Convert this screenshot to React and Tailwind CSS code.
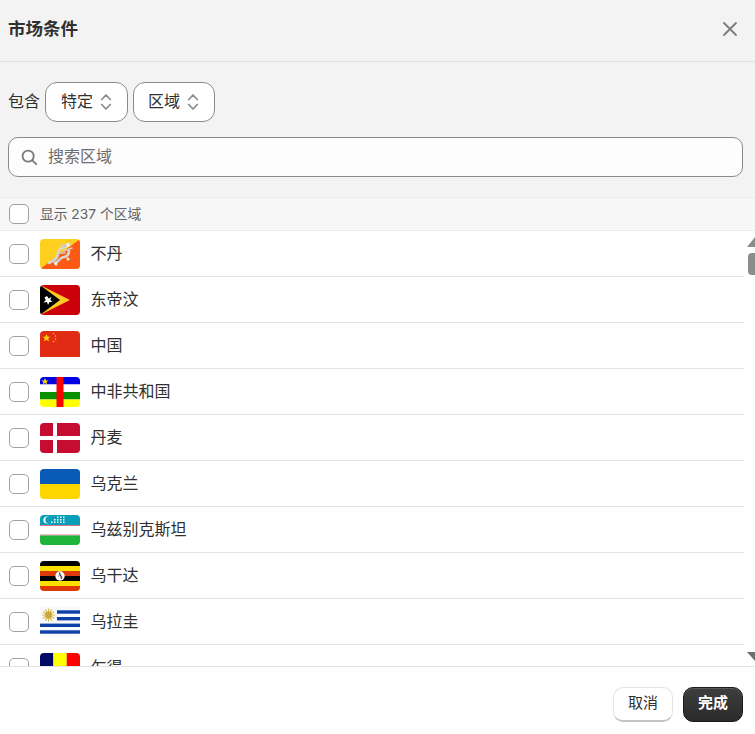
import React from "react";

const FONT = "font-['Inter','Noto_Sans_CJK_SC',sans-serif]";

function Bhutan() {
  return (
    <>
      <rect width="40" height="30" fill="#ffcf1f" />
      <polygon points="40,0 40,30 0,30" fill="#fb5a14" />
      <path d="M9 24 C13 22 15 21 17 18 C19 15 17 12 20 10 C22 8 25 9 27 7 M15 24 C20 22 20 18 24 18 C27 18 29 15 29 12" stroke="#dcd8d1" strokeWidth="2.6" fill="none" strokeLinecap="round" />
      <path d="M21 6 L31 5 M24 12 L32 9 M12 21 L16 25 M20 14 L25 14" stroke="#d2cec6" strokeWidth="1.6" fill="none" strokeLinecap="round" />
      <path d="M18 16 L21 12 M23 8 L27 6 M16 22 L21 20" stroke="#b5b0a8" strokeWidth="0.7" fill="none" />
      <circle cx="28" cy="6" r="2" fill="#efece6" />
      <circle cx="16" cy="25" r="1.5" fill="#f4f1ec" />
      <circle cx="28" cy="20" r="1.5" fill="#f4f1ec" />
    </>
  );
}
function TimorLeste() {
  return (
    <>
      <rect width="40" height="30" fill="#cc000a" />
      <polygon points="0,0 30,15 0,30" fill="#ffc726" />
      <polygon points="0,0 20,15 0,30" fill="#000" />
      <polygon points="7,11 8.6,13.4 11.5,12 10.3,15 12.5,17 9.5,17 8,20 7,17 3.5,17.5 5.8,15 4.5,12.5" fill="#fff" />
    </>
  );
}
function China() {
  return (
    <>
      <rect width="40" height="30" fill="#fff" />
      <rect width="40" height="26" fill="#e12b13" />
      <polygon points="6.5,3 7.6,5.8 10.5,5.8 8.2,7.6 9,10.5 6.5,8.8 4,10.5 4.8,7.6 2.5,5.8 5.4,5.8" fill="#fdd400" />
      <circle cx="13.5" cy="2.5" r="0.8" fill="#fdc400" />
      <circle cx="15.5" cy="5" r="0.8" fill="#fdc400" />
      <circle cx="15.5" cy="8" r="0.8" fill="#fdc400" />
      <circle cx="13.5" cy="10.5" r="0.8" fill="#fdc400" />
    </>
  );
}
function CentralAfrica() {
  return (
    <>
      <rect width="40" height="7.5" fill="#0000e6" />
      <rect y="7.5" width="40" height="7.5" fill="#fff" />
      <rect y="15" width="40" height="7.5" fill="#0a8f00" />
      <rect y="22.5" width="40" height="7.5" fill="#ffff00" />
      <rect x="16.5" width="7" height="30" fill="#ff0000" />
      <polygon points="5,1 6,3.4 8.7,3.4 6.5,5 7.3,7.4 5,6 2.7,7.4 3.5,5 1.3,3.4 4,3.4" fill="#ffe100" />
    </>
  );
}
function Denmark() {
  return (
    <>
      <rect width="40" height="30" fill="#c60c30" />
      <rect x="13" width="4" height="30" fill="#fff" />
      <rect y="13" width="40" height="4" fill="#fff" />
    </>
  );
}
function Ukraine() {
  return (
    <>
      <rect width="40" height="15" fill="#0a5ab8" />
      <rect y="15" width="40" height="15" fill="#ffd500" />
    </>
  );
}
function Uzbekistan() {
  const spots = [[17, 2.5], [20, 2.5], [23, 2.5], [14, 5], [17, 5], [20, 5], [23, 5], [11, 7.5], [14, 7.5], [17, 7.5], [20, 7.5], [23, 7.5]];
  return (
    <>
      <rect width="40" height="30" fill="#fff" />
      <rect width="40" height="10" fill="#0a9fb8" />
      <rect y="10" width="40" height="1" fill="#d9788a" />
      <rect y="19.5" width="40" height="1" fill="#d9788a" />
      <rect y="20.5" width="40" height="9.5" fill="#1eb53a" />
      <circle cx="7" cy="5" r="3.6" fill="#fff" />
      <circle cx="8.5" cy="5" r="3.2" fill="#0a9fb8" />
      {spots.map(([x, y], i) => (
        <rect key={i} x={x} y={y - 1} width="1.5" height="1.5" fill="#fff" />
      ))}
    </>
  );
}
function Uganda() {
  return (
    <>
      <rect width="40" height="5" fill="#000" />
      <rect y="5" width="40" height="5" fill="#fee000" />
      <rect y="10" width="40" height="5" fill="#de3908" />
      <rect y="15" width="40" height="5" fill="#000" />
      <rect y="20" width="40" height="5" fill="#fee000" />
      <rect y="25" width="40" height="5" fill="#de3908" />
      <circle cx="20" cy="15" r="4.7" fill="#fff" />
      <path d="M19.5 11.5 L20 14 L21.5 15.5 L21.5 18" stroke="#444" strokeWidth="1.3" fill="none" />
      <path d="M19 14 L18.5 16" stroke="#999" strokeWidth="1" fill="none" />
      <rect x="20.5" y="15.5" width="1.5" height="1.6" fill="#c33" />
    </>
  );
}
const uruguayRays = [0, 1, 2, 3, 4, 5, 6, 7, 8, 9, 10, 11].map((i) => [
  8.5 + 6.5 * Math.cos((i * Math.PI) / 6),
  8 + 6.5 * Math.sin((i * Math.PI) / 6),
]);
function Uruguay() {
  return (
    <>
      <rect width="40" height="30" fill="#f8f9fb" />
      <rect x="17" y="3.3" width="23" height="3.4" fill="#0c3fa8" />
      <rect x="17" y="10" width="23" height="3.4" fill="#0c3fa8" />
      <rect y="16.6" width="40" height="3.4" fill="#0c3fa8" />
      <rect y="23.3" width="40" height="3.4" fill="#0c3fa8" />
      {uruguayRays.map(([x, y], i) => (
        <line key={i} x1={8.5} y1={8} x2={x} y2={y} stroke="#d9b94a" strokeWidth="1.2" />
      ))}
      <circle cx="8.5" cy="8" r="3.4" fill="#c9a63e" />
    </>
  );
}
function Chad() {
  return (
    <>
      <rect width="13.4" height="30" fill="#000a66" />
      <rect x="13.4" width="13.3" height="30" fill="#ffff00" />
      <rect x="26.7" width="13.3" height="30" fill="#ff0000" />
    </>
  );
}

const rows = [
  ["不丹", Bhutan],
  ["东帝汶", TimorLeste],
  ["中国", China],
  ["中非共和国", CentralAfrica],
  ["丹麦", Denmark],
  ["乌克兰", Ukraine],
  ["乌兹别克斯坦", Uzbekistan],
  ["乌干达", Uganda],
  ["乌拉圭", Uruguay],
  ["乍得", Chad],
];

function Checkbox() {
  return <span className="block w-5 h-5 shrink-0 rounded-[5px] bg-white border border-[#a0a0a0]" />;
}

function Updown() {
  return (
    <svg width="12" height="20" viewBox="0 0 12 20" fill="none" stroke="#8a8a8a" strokeWidth="1.7" strokeLinecap="round" strokeLinejoin="round">
      <path d="M1.7 7.5 L6 3 L10.3 7.5" />
      <path d="M1.7 12.5 L6 17 L10.3 12.5" />
    </svg>
  );
}

function Pill({ label, className }) {
  return (
    <button className={`h-10 flex items-center justify-between pr-[15px] rounded-[12px] bg-white border border-[#8a8a8a] text-[16px] text-[#303030] ${className}`}>
      <span className="pb-[2px]">{label}</span>
      <Updown />
    </button>
  );
}

export default function App() {
  return (
    <div className={`${FONT} w-[755px] h-[734px] flex flex-col bg-white text-[#303030] overflow-hidden`}>
      <header className="h-[62px] shrink-0 flex items-center justify-between pl-2 pr-[17px] pb-[2px] bg-[#f3f3f3] border-b border-[#e1e1e1]">
        <h1 className="text-[17.5px] font-bold">市场条件</h1>
        <svg width="16" height="16" viewBox="0 0 16 16" fill="none" stroke="#7c7c7c" strokeWidth="1.8" strokeLinecap="round" className="mb-[2px]">
          <path d="M2 2 L14 14 M14 2 L2 14" />
        </svg>
      </header>

      <section className="h-[135px] shrink-0 bg-[#f3f3f3] pl-2 pr-3 pt-5 flex flex-col gap-[15px]">
        <div className="flex items-center gap-[5px]">
          <span className="text-[16px] pb-[2px]">包含</span>
          <Pill label="特定" className="w-[83px] pl-[15px]" />
          <Pill label="区域" className="w-[82px] pl-[14px]" />
        </div>
        <div className="h-10 flex items-center gap-[10px] px-3 rounded-[10px] bg-[#fdfdfd] border border-[#8a8a8a]">
          <svg width="17" height="17" viewBox="0 0 19 19" fill="none" stroke="#7a7a7a" strokeWidth="2" strokeLinecap="round">
            <circle cx="8" cy="8" r="6.2" />
            <path d="M12.7 12.7 L17 17" />
          </svg>
          <span className="text-[16px] text-[#6f6f6f] pb-[2px]">搜索区域</span>
        </div>
      </section>

      <div className="h-[34px] shrink-0 flex items-center gap-[11px] pl-[9px] bg-[#f7f7f7] border-y border-[#ebebeb]">
        <Checkbox />
        <span className="text-[13.75px] text-[#616161]">显示 237 个区域</span>
      </div>

      <div className="relative flex-1 min-h-0 overflow-hidden border-b border-[#e3e3e3]">
        <ul className="w-[744px]">
          {rows.map(([name, Flag]) => (
            <li key={name} className="h-[46px] flex items-center pl-[9px] border-b border-[#e3e3e3]">
              <Checkbox />
              <svg width="40" height="30" viewBox="0 0 40 30" className="ml-[11px] rounded-[4px] shrink-0">
                <Flag />
              </svg>
              <span className="ml-[10.5px] pb-[2px] text-[16px]">{name}</span>
            </li>
          ))}
        </ul>
        <div className="absolute right-0 top-[6px] w-[8px] h-[10px] bg-[#8c8c8c] [clip-path:polygon(100%_0,100%_100%,0_100%)]" />
        <div className="absolute right-0 top-[22px] w-[7px] h-[22px] bg-[#8c8c8c] rounded-l-[4px]" />
        <div className="absolute right-0 bottom-[5px] w-[8px] h-[9px] bg-[#6e6e6e] [clip-path:polygon(0_0,100%_0,100%_100%)]" />
      </div>

      <footer className="h-[67px] shrink-0 flex items-start justify-end gap-[10px] pr-3 pt-[20px] bg-white">
        <button className="w-[60px] h-[35px] pb-[2px] rounded-[10px] bg-white border border-[#e3e3e3] border-b-2 border-b-[#c4c4c4] text-[15px] text-[#303030]">取消</button>
        <button className="w-[60px] h-[35px] pb-[2px] rounded-[10px] bg-gradient-to-b from-[#3e3e3e] to-[#2b2b2b] border border-[#1a1a1a] text-[15px] font-bold text-white shadow-[inset_0_1px_0_#5a5a5a]">完成</button>
      </footer>
    </div>
  );
}
